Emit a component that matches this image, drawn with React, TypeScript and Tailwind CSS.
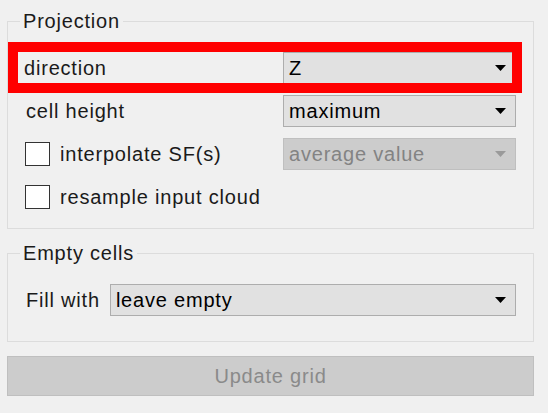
import type { ReactNode } from "react";

function Arrow({ disabled }: { disabled?: boolean }) {
  return (
    <svg width="11" height="6" viewBox="0 0 11 6" className="shrink-0">
      <path d="M0 0 H11 L5.5 6 Z" fill={disabled ? "#9a9a9a" : "#000000"} />
    </svg>
  );
}

function Combo({ value, disabled, className }: { value: string; disabled?: boolean; className?: string }) {
  return (
    <div
      className={`flex h-[32px] items-center justify-between border pl-[5px] pr-[9px] ${
        disabled ? "border-[#bfbfbf] bg-[#cccccc] text-[#838383]" : "border-[#adadad] bg-[#e1e1e1] text-black"
      } ${className ?? ""}`}
    >
      <span>{value}</span>
      <Arrow disabled={disabled} />
    </div>
  );
}

function Checkbox({ label }: { label: string }) {
  return (
    <div className="flex items-center">
      <div className="ml-[1px] h-[24px] w-[25px] border border-[#333333] bg-white" />
      <span className="ml-[10px]">{label}</span>
    </div>
  );
}

function Group({
  title,
  children,
  className,
  legendClass,
}: {
  title: string;
  children: ReactNode;
  className?: string;
  legendClass?: string;
}) {
  return (
    <fieldset className={`border border-[#dcdcdc] ${className ?? ""}`}>
      <legend className={`px-[3px] leading-[20px] ${legendClass ?? ""}`}>{title}</legend>
      {children}
    </fieldset>
  );
}

export default function App() {
  return (
    <div
      className="relative h-[413px] w-[548px] overflow-hidden bg-[#f0f0f0] pl-[7px] pr-[14px] pt-[11px] text-[20px] tracking-[0.8px] text-[#1a1a1a]"
      style={{ fontFamily: '"Liberation Sans", Arial, sans-serif' }}
    >
      <Group title="Projection" legendClass="ml-[-4px]" className="pb-[15px] pl-[16px] pr-[17px] pt-[21px]">
        <div className="flex flex-col gap-[11px]">
          <div className="flex h-[32px] items-center justify-between">
            <span>direction</span>
            <Combo value="Z" className="w-[233px]" />
          </div>
          <div className="flex h-[32px] items-center justify-between pl-[2px]">
            <span>cell height</span>
            <Combo value="maximum" className="w-[233px]" />
          </div>
          <div className="flex h-[32px] items-center justify-between">
            <Checkbox label="interpolate SF(s)" />
            <Combo value="average value" disabled className="w-[233px]" />
          </div>
          <div className="flex h-[32px] items-center">
            <Checkbox label="resample input cloud" />
          </div>
        </div>
      </Group>

      <Group title="Empty cells" legendClass="ml-[-6px]" className="mt-[14px] pb-[25px] pl-[18px] pr-[17px] pt-[21px]">
        <div className="flex h-[32px] items-center gap-[10px]">
          <span className="shrink-0">Fill with</span>
          <Combo value="leave empty" className="flex-1" />
        </div>
      </Group>

      <button className="mt-[14px] flex h-[40px] w-[527px] items-center justify-center border border-[#bfbfbf] bg-[#cccccc] text-[#8a8a8a]">
        Update grid
      </button>

      <div className="pointer-events-none absolute left-[8px] top-[42px] h-[51px] w-[514px] border-[10px] border-[#ff0000]" />
    </div>
  );
}
